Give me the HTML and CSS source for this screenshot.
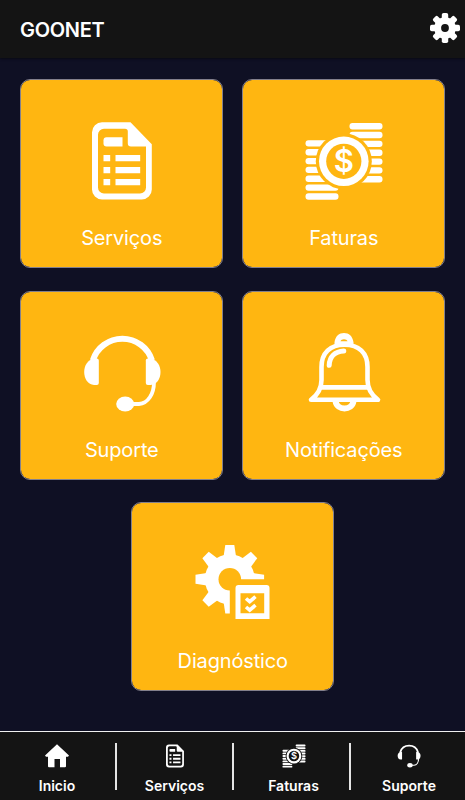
FILE: index.html
```html
<!DOCTYPE html>
<html lang="pt-BR">
<head>
    <meta charset="utf-8" />
    <title>GOONET</title>
    <link rel="stylesheet" href="styles.css">
</head>
<body>
    <!-- icons shared by the cards and the bottom menu -->
    <svg class="icon-defs" width="0" height="0">
        <symbol id="icon-doc" viewBox="0 0 80 80">
            <path fill-rule="evenodd" d="M20 1.3H48.5L69.8 23.3V68.5a10 10 0 0 1-10 10H20a10 10 0 0 1-10-10V11.3a10 10 0 0 1 10-10zM22 7.7a6 6 0 0 0-6 6V66.5a6 6 0 0 0 6 6H58a6 6 0 0 0 6-6V25.5H49a3.2 3.2 0 0 1-3.2-3.2V10.5a2.8 2.8 0 0 0-2.8-2.8z" />
            <path d="M24.5 16.3H40.5V25.5H24.5a3 3 0 0 1-3-3V19.3a3 3 0 0 1 3-3z" />
            <path d="M21.5 34h6.7v6.3h-6.7zM33.5 34h24.7v6.3H33.5zM21.5 46h6.7v6.3h-6.7zM33.5 46h24.7v6.3H33.5zM21.5 58h6.7v6.3h-6.7zM33.5 58h24.7v6.3H33.5z" />
        </symbol>
        <symbol id="icon-coins" viewBox="0 0 80 80">
            <g id="stack">
                <rect x="45.5" y="2" width="33" height="6.4" rx="3" />
                <rect x="45.5" y="10.8" width="33" height="6.4" rx="3" />
                <rect x="45.5" y="19.7" width="33" height="6.4" rx="3" />
                <rect x="45.5" y="28.5" width="33" height="6.4" rx="3" />
                <rect x="45.5" y="37.4" width="33" height="6.4" rx="3" />
                <rect x="45.5" y="46.2" width="33" height="6.4" rx="3" />
                <rect x="45.5" y="55.1" width="33" height="6.4" rx="3" />
            </g>
            <use href="#stack" x="-44" y="17.2" />
            <circle class="cut" cx="39.8" cy="40.3" r="28" />
            <circle cx="39.8" cy="40.3" r="24.8" />
            <circle class="cut" cx="39.8" cy="40.3" r="17.6" />
            <text class="dollar" x="39.8" y="51" text-anchor="middle">$</text>
        </symbol>
        <symbol id="icon-headset" viewBox="0 0 80 80">
            <path class="line" stroke-width="6" d="M10.8 27.5A31 31 0 0 1 70 27.5" />
            <path d="M12 25.5h2.8a2 2 0 0 1 2 2v22.5a2 2 0 0 1-2 2H12C6 51.5 2.2 46 2.2 39S6 27 12 25.5z" />
            <path d="M68.7 25.5h-2.9a2 2 0 0 0-2 2v22.5a2 2 0 0 0 2 2h2.9C74.7 51.5 78.5 46 78.5 39S74.7 27 68.7 25.5z" />
            <path class="line" stroke-width="3.8" d="M50 71H57C66 70.5 72 61 72 49" />
            <ellipse cx="43.2" cy="71" rx="9" ry="7.5" />
        </symbol>
        <symbol id="icon-bell" viewBox="0 0 80 80">
            <path fill-rule="evenodd" d="M30.5 13V9.2C31.5 3 35 0 40 0S48.5 3 49.5 9.2V13zM36.5 8.2H43.5C43 5.5 37 5.5 36.5 8.2z" />
            <path class="line" stroke-width="4.6" stroke-linejoin="round" d="M7 66.8C13.5 62 17.5 56 17.5 47V34C17.5 20 26 11.8 40.5 11.8S63.5 20 63.5 34V47C63.5 56 67.5 62 74 66.8z" />
            <path class="line" stroke-width="4.8" d="M17 54.3H64" />
            <path class="line" stroke-width="5" stroke-linecap="round" d="M25.2 32.3C25.5 23.5 31 18.4 39.8 17.9" />
            <path class="line" stroke-width="6" d="M31.500 68C33 78 48 78 49.500 68" />
        </symbol>
        <symbol id="icon-diagnostic" viewBox="0 0 80 80">
            <g transform="translate(36.8 35.3)">
                <circle r="25" />
                <path id="tooth" d="M-6.2-23L-4.5-34.3H4.5L6.2-23z" />
                <use href="#tooth" transform="rotate(45)" />
                <use href="#tooth" transform="rotate(90)" />
                <use href="#tooth" transform="rotate(180)" />
                <use href="#tooth" transform="rotate(225)" />
                <use href="#tooth" transform="rotate(270)" />
                <use href="#tooth" transform="rotate(315)" />
                <circle class="cut" r="11.3" />
                <path class="cut" d="M0 0H40V40H0z" />
            </g>
            <path fill-rule="evenodd" d="M45.5 41h28a3 3 0 0 1 3 3v31h-34V44a3 3 0 0 1 3-3zM47.5 49.3v20h23.7v-20z" />
            <path class="line" stroke-width="3.6" d="M53 54.5l3.7 3.2 5.8-5M53 63l3.7 3.2 5.8-5" />
        </symbol>
    </svg>

    <header class="topbar">
        <h1 class="brand">GOONET</h1>
        <svg class="settings" viewBox="-15 -15 30 30">
            <circle r="10.8" />
            <rect x="-3.2" y="-15" width="6.4" height="30" rx="1.8" />
            <rect x="-3.2" y="-15" width="6.4" height="30" rx="1.8" transform="rotate(45)" />
            <rect x="-3.2" y="-15" width="6.4" height="30" rx="1.8" transform="rotate(90)" />
            <rect x="-3.2" y="-15" width="6.4" height="30" rx="1.8" transform="rotate(135)" />
            <circle class="cut" r="3.9" />
        </svg>
    </header>

    <main class="cards">
        <a class="card">
            <svg class="card-icon"><use href="#icon-doc" /></svg>
            <span class="card-title">Serviços</span>
        </a>
        <a class="card">
            <svg class="card-icon"><use href="#icon-coins" /></svg>
            <span class="card-title">Faturas</span>
        </a>
        <a class="card">
            <svg class="card-icon"><use href="#icon-headset" /></svg>
            <span class="card-title">Suporte</span>
        </a>
        <a class="card">
            <svg class="card-icon"><use href="#icon-bell" /></svg>
            <span class="card-title">Notificações</span>
        </a>
        <a class="card">
            <svg class="card-icon"><use href="#icon-diagnostic" /></svg>
            <span class="card-title">Diagnóstico</span>
        </a>
    </main>

    <nav class="menu">
        <a class="menu-item">
            <svg class="menu-icon" viewBox="0 0 24 24"><path d="M12 .3L24 11.5 23 12.7H21V22.2a1 1 0 0 1-1 1H15V15H9.5v8.2H4a1 1 0 0 1-1-1V12.7H1L0 11.5z" /></svg>
            <span>Inicio</span>
        </a>
        <a class="menu-item">
            <svg class="menu-icon"><use href="#icon-doc" /></svg>
            <span>Serviços</span>
        </a>
        <a class="menu-item">
            <svg class="menu-icon"><use href="#icon-coins" /></svg>
            <span>Faturas</span>
        </a>
        <a class="menu-item">
            <svg class="menu-icon"><use href="#icon-headset" /></svg>
            <span>Suporte</span>
        </a>
    </nav>
</body>
</html>
```
FILE: styles.css
```css
* {
    box-sizing: border-box;
}

body {
    margin: 0;
    height: 100vh;
    display: flex;
    flex-direction: column;
    background: #0f1024;
    color: white;
    font-family: Inter, "Open Sans", sans-serif;
    overflow: hidden;
}

svg {
    fill: currentColor;
    display: block;
}

.icon-defs {
    display: none;
}

.cut {
    fill: var(--cut);
}

.line {
    fill: none;
    stroke: currentColor;
}

.dollar {
    font-size: 31px;
    font-weight: 600;
}

.topbar {
    --cut: #141414;
    height: 58px;
    flex: none;
    display: flex;
    align-items: center;
    justify-content: space-between;
    padding: 0 5px 2px 20px;
    background: #141414;
    box-shadow: 0 1px 2px #0a0a14;
}

.brand {
    margin: 4px 0 0;
    font-size: 20px;
    font-weight: 600;
    letter-spacing: -0.3px;
}

.settings {
    width: 30px;
    height: 30px;
}

.cards {
    flex: 1;
    display: flex;
    flex-wrap: wrap;
    justify-content: center;
    align-content: flex-start;
    gap: 22.5px 18.5px;
    padding: 21px 20px 0 19.5px;
}

.card {
    --cut: #ffb611;
    width: 203.5px;
    height: 189px;
    display: flex;
    flex-direction: column;
    align-items: center;
    padding: 41px 0 0 1px;
    background: #ffb611 padding-box;
    border: 1px solid #83808c;
    border-radius: 10px;
}

.card-icon {
    width: 80px;
    height: 80px;
}

.card-title {
    margin-top: 24px;
    font-size: 20px;
    line-height: 26px;
    letter-spacing: -0.15px;
}

.menu {
    --cut: #141414;
    height: 69px;
    flex: none;
    display: grid;
    grid-template-columns: 117px 117px 117px 1fr;
    background: #141414;
    border-top: 1px solid #f0f0f0;
}

.menu-item {
    position: relative;
    display: flex;
    flex-direction: column;
    align-items: center;
    padding-top: 12px;
    font-size: 14px;
    font-weight: 600;
    line-height: 18px;
}

    .menu-item:first-child {
        padding-right: 3px;
    }

    .menu-item:nth-child(2) {
        padding-right: 2px;
    }

    .menu-item:nth-child(3),
    .menu-item:last-child {
        padding-left: 2px;
    }

    .menu-item:not(:last-child)::after {
        content: "";
        position: absolute;
        right: 0;
        top: 11px;
        width: 2px;
        height: 47px;
        background: #e4e4e4;
    }

.menu-icon {
    width: 24px;
    height: 24px;
    margin-bottom: 9px;
}
```
